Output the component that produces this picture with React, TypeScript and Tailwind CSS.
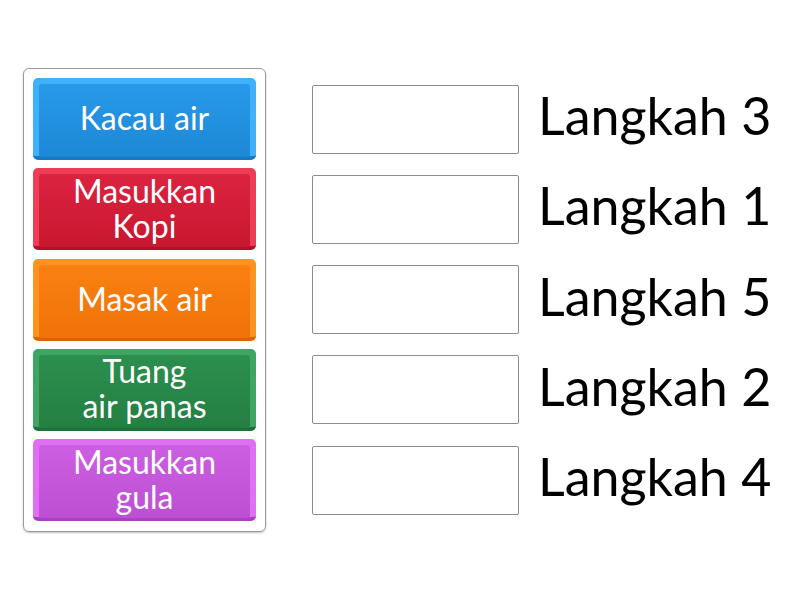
const cards = [
  { label: ["Kacau air"], light: "bg-[#3fb0fb]", face: "bg-gradient-to-b from-[#279ae9] to-[#1d88d6]", dark: "border-[#1779c2]" },
  { label: ["Masukkan", "Kopi"], light: "bg-[#ee3d55]", face: "bg-gradient-to-b from-[#db2340] to-[#c9172f]", dark: "border-[#b3102a]" },
  { label: ["Masak air"], light: "bg-[#ff931f]", face: "bg-gradient-to-b from-[#f98111] to-[#f07208]", dark: "border-[#dc6400]" },
  { label: ["Tuang", "air panas"], light: "bg-[#3fa563]", face: "bg-gradient-to-b from-[#2c8f4e] to-[#247f43]", dark: "border-[#1d7038]" },
  { label: ["Masukkan", "gula"], light: "bg-[#e070f3]", face: "bg-gradient-to-b from-[#cc5ee2] to-[#bd4fd4]", dark: "border-[#a941c0]" },
];

const targets = ["Langkah 3", "Langkah 1", "Langkah 5", "Langkah 2", "Langkah 4"];

export default function App() {
  return (
    <div className="w-[800px] h-[600px] bg-white font-['Lato',sans-serif]">
      <div className="flex pt-[68px] pl-[23px]">
        <div className="w-[243px] h-[464px] border border-[#9a9a9a] rounded-[6px] shadow-[0_1px_2px_rgba(0,0,0,0.25)] px-[9px] pt-[9px] flex flex-col gap-[8.25px]">
          {cards.map((c, i) => (
            <div
              key={i}
              className={`h-[82px] rounded-[5px] border-b-[4px] ${c.light} ${c.dark} pt-[6px] px-[6px] flex`}
            >
              <div className={`flex-1 rounded-[3px] ${c.face} flex items-center justify-center pb-[6px] -mb-[1px]`}>
                <p className="text-white text-[32px] leading-[35px] text-center">
                  {c.label.map((l, j) => (
                    <span key={l}>
                      {j > 0 && <br />}
                      {l}
                    </span>
                  ))}
                </p>
              </div>
            </div>
          ))}
        </div>
        <div className="ml-[46px] pt-[10px] flex flex-col gap-[8.25px]">
          {targets.map((t) => (
            <div key={t} className="h-[82px] flex items-center">
              <div className="w-[207px] h-[69px] border border-[#8c8c8c] rounded-[2px]" />
              <span className="ml-[19px] mb-[8px] text-[52px] leading-none text-black">{t}</span>
            </div>
          ))}
        </div>
      </div>
    </div>
  );
}
